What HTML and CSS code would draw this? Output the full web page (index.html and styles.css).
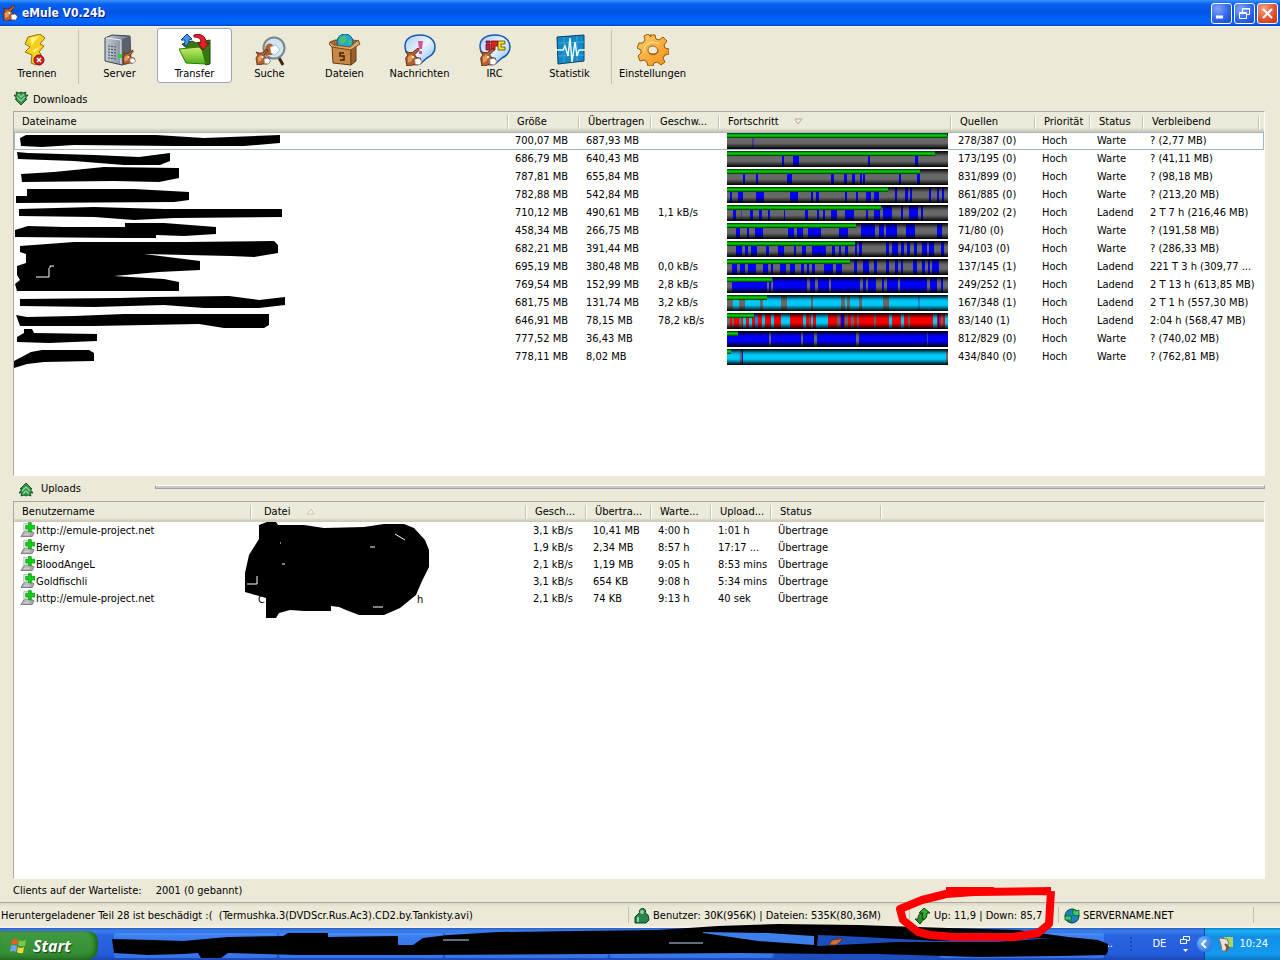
FILE: index.html
```html
<!DOCTYPE html>
<html lang="de">
<head>
    <meta charset="utf-8">
    <title>eMule V0.24b</title>
    <link rel="stylesheet" href="styles.css">
</head>
<body>
    <!-- shared icons -->
    <svg class="defs" width="0" height="0">
        <defs>
            <linearGradient id="silver"><stop offset="0" stop-color="#c5ced8"/><stop offset="1" stop-color="#66717e"/></linearGradient>
            <linearGradient id="leaf" x2="0" y2="1"><stop offset="0" stop-color="#c9f06a"/><stop offset="1" stop-color="#4fb01c"/></linearGradient>
            <linearGradient id="bubble" x2="1" y2="1"><stop offset="0" stop-color="#a9ccf3"/><stop offset=".5" stop-color="#eaf5ff"/><stop offset="1" stop-color="#7db9f5"/></linearGradient>
            <linearGradient id="gold" x2="1" y2="1"><stop offset="0" stop-color="#ffd268"/><stop offset="1" stop-color="#ef8d17"/></linearGradient>
        </defs>
        <symbol id="mule" viewBox="0 0 16 16">
            <path d="M2 15 1 9 3 6 1 3l3 1L7 4 12 0l1 2-4 4 2 3 3 0 1 4-3 2H7l-1 1H2z" fill="#b5602c" stroke="#55270f" stroke-width=".8"/>
            <path d="M3 8l3-2 2 2-2 4-3 1z" fill="#e39a5c"/>
            <path d="M9 10l4-1 2.500 3-2 3-4-.5z" fill="#fff" stroke="#777" stroke-width=".6"/>
            <circle cx="7.500" cy="8" r="1" fill="#fff"/>
        </symbol>
        <symbol id="client" viewBox="0 0 16 16">
            <path d="M4 1h8v8H4z" fill="#eee" stroke="#bbb"/>
            <path d="M1 15l3-5h9l2 1-2 4H1z" fill="#aaa" stroke="#666" stroke-width=".8"/>
            <path d="M5 11h6M4 13h6" stroke="#ddd"/>
            <path d="M9 0h3v3h4v4h-4v3H9V7H6V3h3z" fill="#0ad412" stroke="#087d0c" stroke-width=".6"/>
        </symbol>
        <symbol id="arrows" viewBox="0 0 16 16">
            <path d="M3 1l3 1 2-1 2 1 3-1-1 3h3l-3 4h2l-6 6-6-6h2L1 4h3z" fill="#35934a" stroke="#0d4d20" stroke-width=".9"/>
            <path d="M5 3l3 3 3-3M4 6l4 4 4-4" fill="none" stroke="#8bd695" stroke-width="1.300"/>
        </symbol>
    </svg>

    <header class="titlebar">
        <svg width="16" height="16"><use href="#mule"/></svg>
        <h1>eMule V0.24b</h1>
        <button class="win" aria-label="Minimieren"><svg width="19" height="19"><path d="M4 13h7" stroke="#fff" stroke-width="3"/></svg></button>
        <button class="win" aria-label="Wiederherstellen"><svg width="19" height="19" fill="none" stroke="#fff"><path d="M7.500 8V4.500h7v6H12"/><path d="M7 5h8"/><path d="M4.500 8.500h7v6h-7zM4 9.500h8"/></svg></button>
        <button class="win close" aria-label="Schließen"><svg width="19" height="19"><path d="M5 5l9 9M14 5l-9 9" stroke="#fff" stroke-width="2"/></svg></button>
    </header>

    <nav class="toolbar">
        <button>
            <svg viewBox="0 0 32 32"><path d="M7 3l12-3 5 4-5 6 4 2-5 6 2 2-5 11-5-2 1-8-7-3 5-5-5-3z" fill="#f3cf1f" stroke="#97720c"/><path d="M9 4l9-2-7 9zM12 16l7-3-6 6z" fill="#fff07a"/><circle cx="18" cy="26" r="5" fill="#cf2427" stroke="#7c1013"/><path d="M16 24l4 4m0-4l-4 4" stroke="#fff" stroke-width="1.500"/></svg>
            Trennen
        </button>
        <span class="sep"></span>
        <button>
            <svg viewBox="0 0 32 32"><path d="M1 4l7-3 18 1 1 26-9 3L1 27z" fill="url(#silver)" stroke="#3a424c"/><path d="M17 6l9-4 1 26-9 3z" fill="#58616c"/><path d="M2 4l15 2v24" fill="none" stroke="#eef2f6"/><path d="M4 12l8 1M4 15l8 1M4 18l8 1M4 21l8 1M4 24l8 1" stroke="#46505b" stroke-dasharray="2 1"/><path d="M14 20h4v4h-4z" fill="#27d32f"/><use href="#mule" x="18" y="15" width="14" height="16"/></svg>
            Server
        </button>
        <button class="active">
            <svg viewBox="0 0 32 32"><path d="M3 10l10-3 4 2 14-3v24l-4 1z" fill="#35780f" stroke="#1c4a06"/><path d="M0 15l20-2 3 3 4 14-20-1z" fill="url(#leaf)" stroke="#2d7a0a"/><path d="M8 0l5 5-3 1c0 3-1 5-4 6-1-2 0-4 0-6H2z" fill="#3f97ea" stroke="#123f8c"/><path d="M15 1c7-2 12 1 12 8h3l-6 7-5-7h3c0-4-2-6-7-6z" fill="#e8202a" stroke="#80090f"/></svg>
            Transfer
        </button>
        <button>
            <svg viewBox="0 0 32 32"><path d="M24 22l5 9" stroke="#3d2613" stroke-width="3"/><circle cx="20" cy="14" r="10.500" fill="#cfe6f3" stroke="#7a8790" stroke-width="2"/><path d="M11 17c0-6 3-9 7-7l3 6-3 5h-6z" fill="#b5602c"/><path d="M16 13l6-2 4 5-5 5-4-2z" fill="#fff" stroke="#999" stroke-width=".6"/><use href="#mule" x="1" y="15" width="16" height="16"/></svg>
            Suche
        </button>
        <button>
            <svg viewBox="0 0 32 32"><path d="M3 13L1 8l5-2h18l6 1-3 4-7 3z" fill="#a86c32" stroke="#7c4c1b"/><circle cx="16" cy="8" r="8" fill="#23a7d5" stroke="#0c5c86"/><path d="M11 3l5-1 2 4-4 4-4-2zM19 6l4 1-3 5z" fill="#4ac466"/><path d="M3 13l19 2v16L4 29z" fill="#c98847" stroke="#663b12"/><path d="M22 15l5-4v16l-5 4z" fill="#9b602a" stroke="#663b12"/><path d="M3 13l-3-3 1-2 4 3 16 2 8-7 2 4-9 6z" fill="#dba768" stroke="#7c4c1b"/><path d="M15 19h-4v3h4v4h-4" fill="none" stroke="#3b2208" stroke-width="1.500"/></svg>
            Dateien
        </button>
        <button>
            <svg viewBox="0 0 32 32"><path d="M16 1c9 0 15 5 15 12 0 6-4 9-8 11l-7 6-2-6C6 24 1 19 1 12S7 1 16 1z" fill="url(#bubble)" stroke="#1458b3" stroke-width="1.500"/><path d="M14 7h5l-1 8h-3zM15 17h3v3h-3z" fill="#d7549c"/><use href="#mule" x="0" y="14" width="19" height="18"/></svg>
            Nachrichten
        </button>
        <button>
            <svg viewBox="0 0 32 32"><path d="M16 1c9 0 15 5 15 12 0 6-4 9-8 11l-7 6-2-6C6 24 1 19 1 12S7 1 16 1z" fill="url(#bubble)" stroke="#1458b3" stroke-width="1.500"/><path d="M7 7h4v2H7zM7 10h4v6H7z" fill="#c91e50" stroke="#600c27" stroke-width=".8"/><path d="M12 7h7v5h-3v4h-4z" fill="#e22218" stroke="#730c07" stroke-width=".8"/><path d="M19 7h7v3h-4v3h4v3h-7z" fill="#ffe21f" stroke="#4d4205" stroke-width=".8"/><use href="#mule" x="0" y="14" width="19" height="18"/></svg>
            IRC
        </button>
        <button>
            <svg viewBox="0 0 32 32"><path d="M3 3l27-2v26l-26 3z" fill="#1487c4" stroke="#073e68"/><path d="M4 9l26-1M4 22l26-1M10 3v26M23 2v25" stroke="#3aaade"/><path d="M1 16h8l2-4 3 10 2-18 2 24 3-20 2 14 2-6h7" fill="none" stroke="#e8fbff" stroke-width="1.500"/></svg>
            Statistik
        </button>
        <span class="sep"></span>
        <button>
            <svg viewBox="0 0 32 32"><path fill-rule="evenodd" d="M13 1h5l1 4 3 1 4-3 4 4-3 4 1 3 4 1v5l-4 1-2 3 2 4-4 3-4-3-3 1-1 3h-5l-1-4-3-2-4 1-2-5 3-3v-3l-4-2 2-5h4l2-3-1-4 4-2 3 3zM15 12c-5 0-6 8 1 8s6-8-1-8z" fill="url(#gold)" stroke="#9b5508"/><path d="M7 17c0-8 8-11 15-7" fill="none" stroke="#ffe7a0"/><path d="M12 19c3 3 9 2 9-3" fill="none" stroke="#9b5508"/></svg>
            Einstellungen
        </button>
    </nav>

    <main>
        <h2><svg width="16" height="16"><use href="#arrows"/></svg>Downloads</h2>
        <section class="list downloads">
            <table>
                <colgroup>
                    <col><col class="w71"><col class="w72"><col class="w68"><col class="w232"><col class="w84"><col class="w55"><col class="w53"><col class="w116"><col class="w4">
                </colgroup>
                <thead>
                    <tr><th>Dateiname</th><th>Größe</th><th>Übertragen</th><th>Geschw...</th><th>Fortschritt <svg class="sort" width="9" height="7"><path d="M1 1h7L4 6z" fill="#f5f3e6" stroke="#aca899"/></svg></th><th>Quellen</th><th>Priorität</th><th>Status</th><th>Verbleibend</th><th></th></tr>
                </thead>
                <tbody id="downloads"></tbody>
            </table>
            <svg class="ink" width="290" height="240" aria-hidden="true">
                <path d="M6 6L12 3H142L190 6 266 3V11L230 14 160 14 60 13 28 15 7 14z"/>
                <path d="M3 20L14 21 80 23 125 25 156 21V29L146 33H110L60 29 4 27z"/>
                <path d="M7 42L40 40 90 35 165 36V46L145 50 100 49 8 50z"/>
                <path d="M13 57L120 57 175 60V68L160 70 2 71V64L13 64z"/>
                <path d="M5 77L80 75 150 77 268 77V85L160 86 120 88 80 85 5 84z"/>
                <path d="M1 98L14 94 50 95 111 95V91H150L202 95V102L170 104 142 103V106H111L1 105z"/>
                <path d="M6 114L60 110 170 110 260 109 264 113V121L240 125 217 124 130 122 186 129V138L145 140 100 144 150 147 165 150V159H3L1 152 6 148 3 143V134L12 131V122L6 120z"/>
                <path d="M6 167L105 166 140 165 215 164 245 168 271 165V173L245 176H190L150 173 80 175 6 174z"/>
                <path d="M2 183L13 185 60 184 110 182 255 182V193L250 196H210L185 192 80 194 6 194z"/>
                <path d="M3 205L10 201V197H18L20 201 83 202V209L35 211 3 210z"/>
                <path d="M0 229L17 220 28 218H75L80 221V229L30 230 13 232 0 236z"/>
                <path d="M22 145H35V136M36 136V134h4" fill="none" stroke="#fff"/>
            </svg>
        </section>

        <div class="splitter">
            <h2><svg class="up" width="16" height="16"><use href="#arrows"/></svg>Uploads</h2>
            <hr>
        </div>
        <section class="list uploads">
            <table>
                <colgroup>
                    <col class="w238"><col class="w275"><col class="w60"><col class="w65"><col class="w60"><col class="w60"><col class="w110"><col>
                </colgroup>
                <thead>
                    <tr><th>Benutzername</th><th class="file">Datei <svg class="sort" width="9" height="7"><path d="M1 6h7L5 1z" fill="#f5f3e6" stroke="#c9c5b3"/></svg></th><th>Gesch...</th><th>Übertra...</th><th>Warte...</th><th>Upload...</th><th>Status</th><th></th></tr>
                </thead>
                <tbody id="uploads"></tbody>
            </table>
            <svg class="ink" width="430" height="120" aria-hidden="true">
                <path d="M245 23L253 20 262 20 264 23 290 23 310 26 350 25 370 22 390 22 400 26 411 38 415 48V65L408 79 402 93 386 106 370 113 345 113 332 108 325 105 317 104V109L290 109 276 108 265 111 262 116H252V96L245 94 231 90V71L235 53 245 37z"/>
                <path d="M381 32l10 6M356 45h5M233 82h10v-8M359 105h10M266 41h1M268 62h3" fill="none" stroke="#fff"/>
                <text x="244" y="101">C</text><text x="403" y="101">h</text>
            </svg>
        </section>
        <p class="queue"><span>Clients auf der Warteliste:</span><span>2001 (0 gebannt)</span></p>
    </main>

    <footer class="statusbar">
        <span class="message">Heruntergeladener Teil 28 ist beschädigt :(&nbsp; (Termushka.3(DVDScr.Rus.Ac3).CD2.by.Tankisty.avi)</span>
        <span class="users"><svg width="16" height="16"><path d="M1 15V9l3-3 2-1a3 3 0 1 1 5 0l3 2 1 5-3 3z" fill="#298450" stroke="#0e4425"/><circle cx="8" cy="4" r="2" fill="#8ed0a4"/><path d="M4 9v5" stroke="#8ed0a4" stroke-width="2"/></svg>Benutzer: 30K(956K) | Dateien: 535K(80,36M)</span>
        <span class="speed"><svg width="16" height="16"><path d="M9 0l6 5h-3c0 4-1 6-4 7l-2-3 2-4H4z" fill="#31b034" stroke="#0a420c"/><path d="M5 16l-5-5h3c0-4 1-5 4-6l1 4-1 2h2z" fill="#2a8d2e" stroke="#0a420c"/></svg>Up: 11,9 | Down: 85,7
            <svg class="marker" width="164" height="60" aria-hidden="true"><path d="M157 9L80 10 52 12 28 18 6 27 9 38 24 50 36 53 60 55 120 55 144 51 155 42 157 9" fill="none" stroke="#f00" stroke-width="8" stroke-linejoin="round"/><path d="M52 8h48" stroke="#f00" stroke-width="6"/></svg>
        </span>
        <span class="server"><svg width="16" height="16"><circle cx="8" cy="8" r="7" fill="#1b85b5" stroke="#0b3d59"/><path d="M1 8h6v7l-2-3-4 0zM15 8V2l-3 1-3-2v6z" fill="#3dd05c" stroke="#0b4f25" stroke-width=".7"/></svg>SERVERNAME.NET</span>
        <span class="grip"></span>
    </footer>

    <div class="taskbar">
        <button class="start"><svg width="18" height="18"><path d="M2 3q3-2 6 0L7 8Q4 6 1 8z" fill="#f0592a"/><path d="M9 3q3 2 7 0l-1 6q-4 1-7-1z" fill="#7cc94a"/><path d="M1 9q3-2 6 0l-1 6q-3-2-6 0z" fill="#6aa4f4"/><path d="M8 10q3 2 6 0l-1 6q-4 1-6-1z" fill="#fbd43c"/></svg>Start</button>
        <div class="tasks">
            <span></span><span></span><span></span><span></span><span class="current"></span><span></span>
            <svg class="ink" width="1040" height="40" aria-hidden="true"><path d="M14 15L55 16 85 17 130 13 185 12 190 9 230 9V13L300 12V21H315L325 14 350 11 400 8 480 7 560 6 620 2 680 0 760 1 850 4 920 6 970 13 1000 16 1010 20V27L1008 31 960 32 880 33 780 30 740 30 640 29 500 30 315 31 200 31 130 29 123 34 103 34 100 29 85 30 50 31 16 29z"/><path d="M605 8L670 9 716 12v9L660 17 605 9z" fill="#3c7eea"/><path d="M720 11L745 12 840 17 895 15 955 14 900 18 800 18 719 22z" fill="#1c4dbd"/><path d="M571 19h34M345 16h26" stroke="#c6d9ff"/><path d="M731 21l3-5 7-1 4-1-3 4-4 3z" fill="#c9713a" stroke="#55270f" stroke-width=".8"/></svg>
        </div>
        <span class="dots">...</span>
        <span class="lang">DE</span>
        <svg class="restore" width="10" height="18"><path d="M3.500 4V1.500h6v4H7M.5 4.500h6v4h-6z" fill="none" stroke="#fff"/><path d="M3 14h5l-2.500 3z" fill="#fff"/></svg>
        <div class="tray">
            <button class="chevron" aria-label="Ausgeblendete Symbole einblenden"><svg width="8" height="10"><path d="M6 1L2 5l4 4" fill="none" stroke="#fff" stroke-width="2"/></svg></button>
            <svg width="16" height="16"><path d="M6 1h9v10H6z" fill="#a8da58"/><path d="M1 2l8 1 2 5-3 2 2 5H4L3 9z" fill="#e8e3d6" stroke="#777"/><path d="M7 8l3 3-2 4" fill="none" stroke="#8e4b22" stroke-width="2"/></svg>
            <time>10:24</time>
        </div>
    </div>
    <script src="script.js"></script>
</body>
</html>
```
FILE: styles.css
```css
body {
    display: flex;
    flex-direction: column;
    height: 100vh;
    margin: 0;
    overflow: hidden;
    background: #ece9d8;
    color: #000;
    font: 11px/14px "DejaVu Sans Condensed", Tahoma, sans-serif;
}

button {
    padding: 0;
    font: inherit;
    color: inherit;
}

svg {
    flex: none;
}

.defs {
    position: absolute;
}

/* title bar */
.titlebar {
    display: flex;
    flex: none;
    align-items: center;
    gap: 2px;
    box-sizing: border-box;
    height: 27px;
    padding: 0 2px;
    background: linear-gradient(#3a93ff, #0a62ee 4px, #0054e3 12px, #0066ff 21px, #0060f5 24px, #003dc4);
    border-bottom: 1px solid #f5f3e8;
}

h1 {
    flex: 1;
    margin: 0 0 0 2px;
    color: #fff;
    font: bold 12px/16px "DejaVu Sans Condensed", "Trebuchet MS", sans-serif;
    text-shadow: 1px 1px #0a1883;
}

.win {
    box-sizing: border-box;
    width: 21px;
    height: 21px;
    border: 1px solid #fff;
    border-radius: 3px;
    background: radial-gradient(circle at 30% 25%, #7fa4f5, #2c62e8 60%, #1b4ad0);
}

.win svg {
    display: block;
}

.close {
    background: radial-gradient(circle at 30% 25%, #f2a083, #e0502b 60%, #c4380f);
}

/* toolbar */
.toolbar {
    display: flex;
    flex: none;
    height: 56px;
    padding-top: 1px;
}

.toolbar button {
    display: flex;
    flex-direction: column;
    align-items: center;
    gap: 1px;
    box-sizing: border-box;
    width: 75px;
    height: 55px;
    padding-top: 5px;
    border: 1px solid transparent;
    border-radius: 3px;
    background: none;
}

.toolbar button.active {
    background: #fff;
    border-color: #98a6b5;
}

.toolbar button svg {
    width: 32px;
    height: 32px;
}

.sep {
    width: 1px;
    margin: 2px 3px 0 4px;
    background: #c5c2b2;
}

.toolbar button:first-child {
    width: 74px;
}

/* lists */
main {
    display: flex;
    flex: 1;
    flex-direction: column;
    min-height: 0;
    padding: 0 15px 0 13px;
}

h2 {
    display: flex;
    align-items: center;
    gap: 4px;
    height: 27px;
    margin: 0;
    font-size: 11px;
    font-weight: normal;
}

main > h2 {
    padding-top: 5px;
    box-sizing: border-box;
}

main > h2 svg {
    margin-bottom: 3px;
}

.up {
    transform: scaleY(-1);
}

.list {
    position: relative;
    box-sizing: border-box;
    min-height: 0;
    border: 1px solid #aca899;
    border-color: #aca899 #fff #fff #aca899;
    background: #fff;
}

.downloads {
    flex: 365 1 0;
}

.uploads {
    flex: 379 1 0;
}

table {
    width: 100%;
    table-layout: fixed;
    border-collapse: collapse;
}

th, td {
    padding: 0 0 0 6px;
    overflow: hidden;
    font-weight: normal;
    text-align: left;
    white-space: nowrap;
}

th {
    height: 20px;
    padding-left: 8px;
    background: linear-gradient(90deg, #fff, #fff) right 3px / 1px 14px no-repeat,
        linear-gradient(90deg, #c5c2b2, #c5c2b2) calc(100% - 1px) 3px / 1px 14px no-repeat,
        linear-gradient(#ebeadb 16px, #d6d2c2 18px, #cbc7b8);
}

th:last-child {
    background: linear-gradient(#ebeadb 16px, #d6d2c2 18px, #cbc7b8);
}

th.file {
    padding-left: 12px;
}

.sort {
    margin-left: 12px;
}

.downloads td {
    height: 18px;
}

.downloads tbody tr:first-child {
    box-shadow: inset 0 0 0 1px #9fb6cd;
}

.uploads td {
    height: 17px;
    line-height: 17px;
}

.uploads td:first-child svg {
    margin-right: 1px;
    vertical-align: -4px;
}

.w4 { width: 4px; }
.w53 { width: 53px; }
.w55 { width: 55px; }
.w60 { width: 60px; }
.w65 { width: 65px; }
.w68 { width: 68px; }
.w71 { width: 71px; }
.w72 { width: 72px; }
.w84 { width: 84px; }
.w110 { width: 110px; }
.w116 { width: 116px; }
.w232 { width: 232px; }
.w238 { width: 238px; }
.w275 { width: 275px; }

.bar {
    width: 221px;
    height: 16px;
    margin-left: 1px;
}

.bar::before {
    content: "";
    display: block;
    height: 16px;
    background: linear-gradient(#000, rgba(0, 0, 0, 0.2) 4px, transparent 6px, transparent 10px, rgba(0, 0, 0, 0.3) 12px, #000);
}

.bar i {
    display: block;
    height: 5px;
    margin-top: -16px;
    background: linear-gradient(#030, #070 1px, #0cc80c 2px, #0cc80c 3px, #070 4px, #030);
}

.ink {
    position: absolute;
    top: 20px;
    left: 0;
    pointer-events: none;
}

.uploads .ink {
    top: 0;
}

.splitter {
    display: flex;
    flex: none;
    height: 25px;
    padding-left: 5px;
}

.splitter h2 {
    gap: 7px;
    width: 137px;
}

hr {
    flex: 1;
    height: 2px;
    margin: 9px 0 0;
    border: 1px solid #a3a3a3;
    border-top-color: #fff;
    background: #c8c8c8;
    align-self: flex-start;
}

.queue {
    display: flex;
    flex: none;
    gap: 14px;
    margin: 0;
    padding: 5px 0 4px;
}

/* status bar */
.statusbar {
    display: flex;
    flex: none;
    height: 25px;
    border-top: 1px solid #aca899;
    background: linear-gradient(#dcd9c9, #ece9d8 4px, #ece9d8 22px, #f7f6ef);
    line-height: 24px;
}

.statusbar span {
    display: flex;
    align-items: center;
    gap: 3px;
    box-sizing: border-box;
    white-space: nowrap;
    background: linear-gradient(#c5c2b2, #c5c2b2) left 4px / 1px 16px no-repeat;
    padding-left: 6px;
}

.statusbar .message {
    flex: 1;
    padding-left: 1px;
    background: none;
}

.users {
    width: 281px;
}

.speed {
    position: relative;
    width: 149px;
}

.server {
    width: 195px;
}

.grip {
    width: 27px;
}

.marker {
    position: absolute;
    z-index: 1;
    left: -15px;
    top: -21px;
}

/* task bar */
.taskbar {
    display: flex;
    flex: none;
    align-items: center;
    height: 32px;
    background: linear-gradient(#2b5fc4, #3b80ee 3px, #2a66e0 7px, #245bdb 26px, #1c48b4);
    color: #fff;
}

.start {
    display: flex;
    align-items: center;
    align-self: flex-end;
    gap: 5px;
    width: 98px;
    height: 29px;
    padding-left: 10px;
    border: 0;
    border-radius: 0 10px 12px 0;
    background: linear-gradient(#5fa75f, #3f9a3f 4px, #348f34 22px, #2a752a);
    box-shadow: inset -3px 0 4px #1d631d;
    font: italic bold 16px/20px "Open Sans", sans-serif;
    text-shadow: 1px 1px 1px #163f16;
}

.tasks {
    position: relative;
    display: flex;
    flex: 1;
    gap: 2px;
    align-self: stretch;
    padding: 5px 0 2px 16px;
}

.tasks span {
    flex: 1;
    border-radius: 2px;
    background: linear-gradient(#4b8bf5, #3a7bee 5px, #3774e8);
}

.tasks .current {
    background: #1c4dbd;
}

.tasks .ink {
    top: -4px;
}

.dots {
    width: 27px;
}

.lang {
    width: 28px;
    padding-left: 20px;
    border-left: 2px dotted #1c48a8;
}

.restore {
    margin-right: 14px;
}

.tray {
    display: flex;
    align-items: center;
    align-self: stretch;
    gap: 5px;
    padding-right: 12px;
    background: linear-gradient(#0d7ed0, #18b1f3 3px, #128fe8 8px, #129bee 26px, #0d75c4);
    border-left: 1px solid #0c4a9c;
}

.chevron {
    width: 16px;
    height: 16px;
    margin-left: -8px;
    border: 0;
    border-radius: 50%;
    background: radial-gradient(circle at 30% 30%, #6db8ff, #1c62d8);
}

.chevron svg {
    display: block;
    margin: 3px;
}
```
FILE: script.js
```js
// [size, transferred, speed, sources, status, remaining, done px, base colour, parts]
// parts: colour letter, start, end
var downloads = [
    ["700,07 MB", "687,93 MB", "", "278/387 (0)", "Warte", "? (2,77 MB)", 220, "g", "p 25 27"],
    ["686,79 MB", "640,43 MB", "", "173/195 (0)", "Warte", "? (41,11 MB)", 208, "g", "b 55 57 b 66 72 b 141 143 b 188 191"],
    ["787,81 MB", "655,84 MB", "", "831/899 (0)", "Warte", "? (98,18 MB)", 193, "g", "b 16 18 b 29 31 b 60 65 b 104 107 b 117 120 b 125 128 b 133 135 b 136 138 b 172 174 b 190 193"],
    ["782,88 MB", "542,84 MB", "", "861/885 (0)", "Warte", "? (213,20 MB)", 161, "g", "b 3 5 b 11 16 b 29 37 b 63 71 b 84 86 b 89 92 b 118 120 b 129 131 b 139 144 b 147 152 b 168 170 b 178 181 b 183 185 b 202 204 b 210 212 b 215 217"],
    ["710,12 MB", "490,61 MB", "1,1 kB/s", "189/202 (2)", "Ladend", "2 T 7 h (216,46 MB)", 154, "g", "b 6 9 p 14 15 b 23 26 b 32 35 b 41 43 b 57 58 b 78 81 b 90 92 b 96 98 b 104 110 b 118 127 b 139 141 b 147 153 b 156 165 b 174 176 b 182 191 b 194 196"],
    ["458,34 MB", "266,75 MB", "", "71/80 (0)", "Warte", "? (191,58 MB)", 129, "g", "b 9 13 b 20 22 b 28 36 b 61 67 b 70 76 b 81 94 b 112 121 b 134 148 b 152 157 b 159 170 b 179 188 b 210 215"],
    ["682,21 MB", "391,44 MB", "", "94/103 (0)", "Warte", "? (286,33 MB)", 128, "g", "b 9 15 b 18 21 b 24 30 b 39 42 b 51 57 b 67 69 b 75 79 b 85 99 b 105 108 b 112 114 b 118 121 b 128 130 b 132 135 b 159 162 b 165 171 b 174 177 b 180 183 b 187 190 b 195 200 b 202 207 b 214 217"],
    ["695,19 MB", "380,48 MB", "0,0 kB/s", "137/145 (1)", "Ladend", "221 T 3 h (309,77 ...", 123, "g", "b 5 10 b 13 18 b 21 29 b 36 41 b 44 46 b 53 59 b 63 68 b 74 77 b 80 82 b 85 88 b 97 106 b 109 115 b 127 130 b 136 142 b 147 150 b 159 162 b 168 171 b 174 176 b 186 190 b 195 198 b 201 203 b 205 212"],
    ["769,54 MB", "152,99 MB", "2,8 kB/s", "249/252 (1)", "Ladend", "2 T 13 h (613,85 MB)", 45, "b", "g 0 5 g 40 42 g 44 46 g 80 83 g 88 91 g 102 104 g 133 136 g 139 141 g 149 155 g 157 160 g 171 173 g 200 203 g 210 214 g 216 221"],
    ["681,75 MB", "131,74 MB", "3,2 kB/s", "167/348 (1)", "Ladend", "2 T 1 h (557,30 MB)", 40, "c", "g 0 6 g 12 18 g 33 36 g 54 60 g 84 86 g 114 118 g 120 123 g 132 135 g 156 162 l 191 193"],
    ["646,91 MB", "78,15 MB", "78,2 kB/s", "83/140 (1)", "Ladend", "2:04 h (568,47 MB)", 27, "r", "g 0 3 g 5 7 g 12 15 c 16 19 c 22 25 l 28 31 c 35 38 c 44 47 c 54 63 c 76 79 g 82 83 c 84 86 c 89 101 g 110 113 b 114 117 g 118 121 g 124 127 g 130 132 g 147 149 c 162 165 c 174 177 g 181 183 c 206 210 b 211 212 g 214 216 c 218 221"],
    ["777,52 MB", "36,43 MB", "", "812/829 (0)", "Warte", "? (740,02 MB)", 11, "b", "g 42 44 g 74 76 g 87 90 g 129 132 p 200 201"],
    ["778,11 MB", "8,02 MB", "", "434/840 (0)", "Warte", "? (762,81 MB)", 4, "c", "g 13 15 b 15 16 g 219 221"]
];

var uploads = [
    ["http://emule-project.net", "3,1 kB/s", "10,41 MB", "4:00 h", "1:01 h"],
    ["Berny", "1,9 kB/s", "2,34 MB", "8:57 h", "17:17 ..."],
    ["BloodAngeL", "2,1 kB/s", "1,19 MB", "9:05 h", "8:53 mins"],
    ["Goldfischli", "3,1 kB/s", "654 KB", "9:08 h", "5:34 mins"],
    ["http://emule-project.net", "2,1 kB/s", "74 KB", "9:13 h", "40 sek"]
];

var colors = { g: "#686868", b: "#0000f8", c: "#00c8f8", r: "#f80000", p: "#44448c", l: "#1688e8" };

function partGradient(base, parts) {
    var p = parts.split(" ");
    var pos = 0;
    var stops = [];
    for (var i = 0; i < p.length; i += 3) {
        stops.push(colors[base] + " " + pos + "px " + p[i + 1] + "px");
        stops.push(colors[p[i]] + " " + p[i + 1] + "px " + p[i + 2] + "px");
        pos = p[i + 2];
    }
    stops.push(colors[base] + " " + pos + "px");
    return "linear-gradient(90deg, " + stops.join(", ") + ")";
}

document.getElementById("downloads").innerHTML = downloads.map(function (d) {
    var bar = '<div class="bar" style="background-image: ' + partGradient(d[7], d[8]) + '"><i style="width: ' + d[6] + 'px"></i></div>';
    return "<tr><td>" + ["", d[0], d[1], d[2], bar, d[3], "Hoch", d[4], d[5], ""].join("</td><td>") + "</td></tr>";
}).join("");

document.getElementById("uploads").innerHTML = uploads.map(function (u) {
    var name = '<svg width="15" height="16"><use href="#client"/></svg>' + u[0];
    return "<tr><td>" + [name, "", u[1], u[2], u[3], u[4], "Übertrage", ""].join("</td><td>") + "</td></tr>";
}).join("");
```
